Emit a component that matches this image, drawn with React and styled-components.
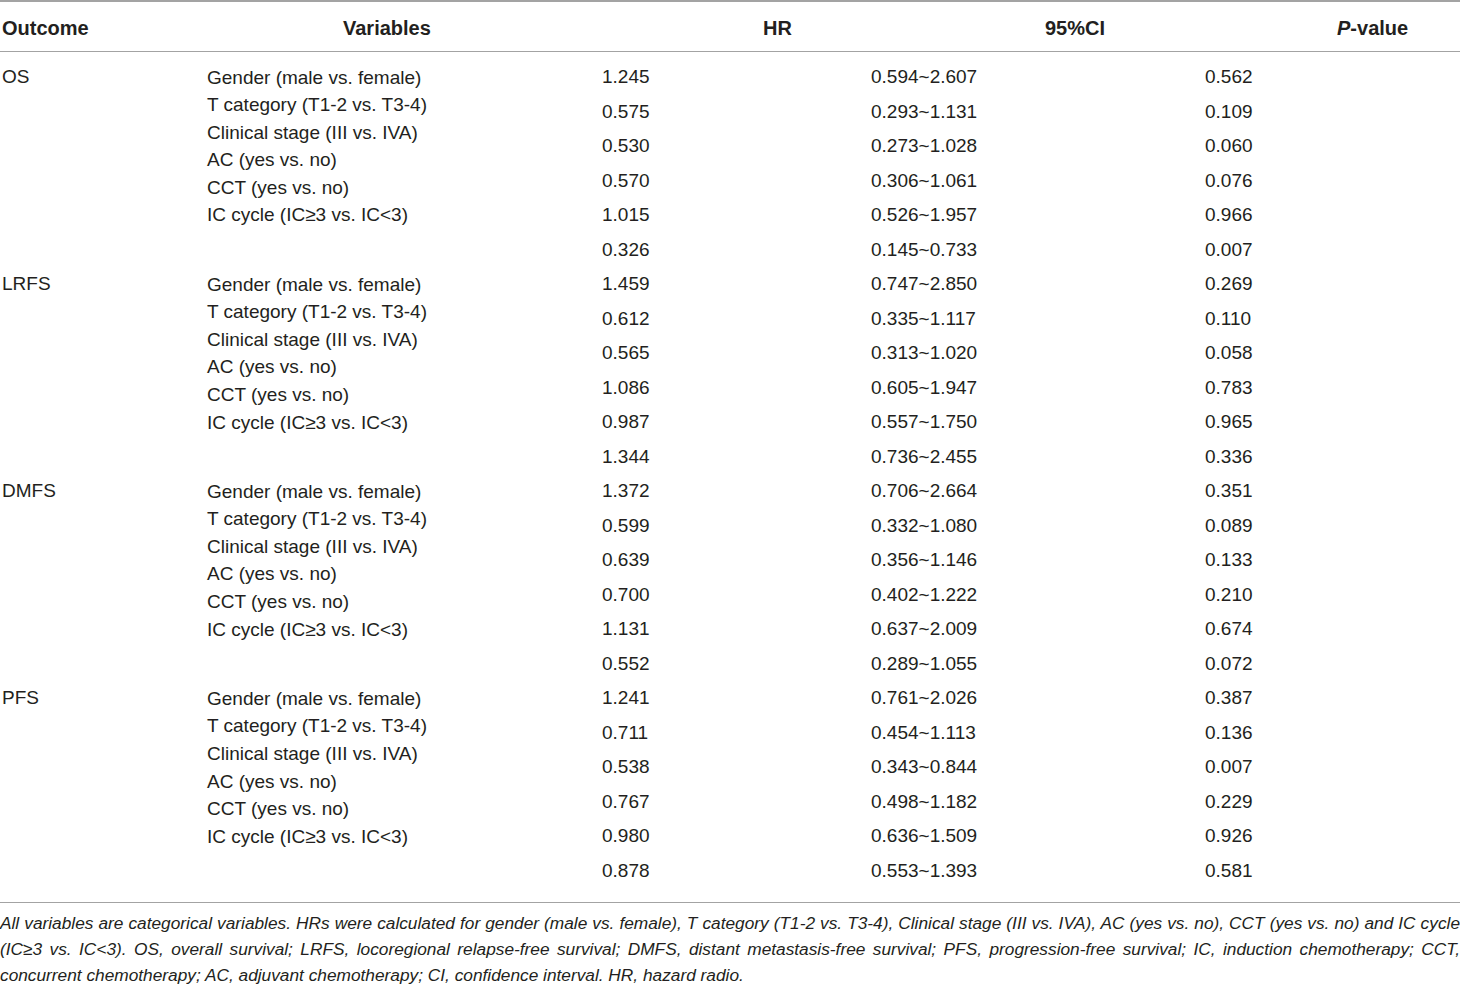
import styled, { createGlobalStyle, css } from 'styled-components';

const GlobalStyle = createGlobalStyle`
  body {
    margin: 0;
    background: #ffffff;
    color: #231f20;
    font-family: 'Liberation Sans', Arial, sans-serif;
  }
`;

const columns = css`
  display: grid;
  grid-template-columns: 207px 395px 269px 334px 1fr;
`;

const TableWrap = styled.div`
  width: 1460px;
  border-top: 2px solid #a3a3a3;
`;

const HeaderRow = styled.div`
  ${columns}
  height: 49px;
  border-bottom: 1.5px solid #a3a3a3;
`;

const HeadCell = styled.div`
  display: flex;
  align-items: center;
  padding: 3px 0 0 ${(p) => p.$pad}px;
  font-size: 20px;
  font-weight: 700;
  white-space: nowrap;
`;

const Body = styled.div`
  padding: 8px 0 14px;
  border-bottom: 1.5px solid #a3a3a3;
`;

const Group = styled.div`
  ${columns}
`;

const Outcome = styled.div`
  padding-left: 2px;
  font-size: 19px;
  line-height: 34.52px;
`;

const List = styled.div`
  display: flex;
  flex-direction: column;
  font-size: 19px;
  line-height: ${(p) => (p.$tight ? '27.6px' : '34.52px')};
  padding-top: ${(p) => (p.$tight ? '3.5px' : '0')};
  white-space: nowrap;
`;

const Note = styled.div`
  padding-top: 7px;
  font-size: 17.3px;
  font-style: italic;
  line-height: 26px;
`;

const NoteLine = styled.div`
  text-align: left;
  text-align-last: ${(p) => (p.$justify ? 'justify' : 'left')};
`;

const variables = [
  'Gender (male vs. female)',
  'T category (T1-2 vs. T3-4)',
  'Clinical stage (III vs. IVA)',
  'AC (yes vs. no)',
  'CCT (yes vs. no)',
  'IC cycle (IC≥3 vs. IC<3)',
];

const groups = [
  {
    outcome: 'OS',
    rows: [
      ['1.245', '0.594~2.607', '0.562'],
      ['0.575', '0.293~1.131', '0.109'],
      ['0.530', '0.273~1.028', '0.060'],
      ['0.570', '0.306~1.061', '0.076'],
      ['1.015', '0.526~1.957', '0.966'],
      ['0.326', '0.145~0.733', '0.007'],
    ],
  },
  {
    outcome: 'LRFS',
    rows: [
      ['1.459', '0.747~2.850', '0.269'],
      ['0.612', '0.335~1.117', '0.110'],
      ['0.565', '0.313~1.020', '0.058'],
      ['1.086', '0.605~1.947', '0.783'],
      ['0.987', '0.557~1.750', '0.965'],
      ['1.344', '0.736~2.455', '0.336'],
    ],
  },
  {
    outcome: 'DMFS',
    rows: [
      ['1.372', '0.706~2.664', '0.351'],
      ['0.599', '0.332~1.080', '0.089'],
      ['0.639', '0.356~1.146', '0.133'],
      ['0.700', '0.402~1.222', '0.210'],
      ['1.131', '0.637~2.009', '0.674'],
      ['0.552', '0.289~1.055', '0.072'],
    ],
  },
  {
    outcome: 'PFS',
    rows: [
      ['1.241', '0.761~2.026', '0.387'],
      ['0.711', '0.454~1.113', '0.136'],
      ['0.538', '0.343~0.844', '0.007'],
      ['0.767', '0.498~1.182', '0.229'],
      ['0.980', '0.636~1.509', '0.926'],
      ['0.878', '0.553~1.393', '0.581'],
    ],
  },
];

const App = () => {
  return (
    <>
      <GlobalStyle />
      <TableWrap>
        <HeaderRow>
          <HeadCell $pad={2}>Outcome</HeadCell>
          <HeadCell $pad={136}>Variables</HeadCell>
          <HeadCell $pad={161}>HR</HeadCell>
          <HeadCell $pad={174}>95%CI</HeadCell>
          <HeadCell $pad={132}>
            <i>P</i>-value
          </HeadCell>
        </HeaderRow>
        <Body>
          {groups.map((group) => (
            <Group key={group.outcome}>
              <Outcome>{group.outcome}</Outcome>
              <List $tight>
                {variables.map((name) => (
                  <span key={name}>{name}</span>
                ))}
              </List>
              {[0, 1, 2].map((col) => (
                <List key={col}>
                  {group.rows.map((row, i) => (
                    <span key={i}>{row[col]}</span>
                  ))}
                </List>
              ))}
            </Group>
          ))}
        </Body>
        <Note>
          <NoteLine $justify>
            All variables are categorical variables. HRs were calculated for gender (male vs. female), T category (T1-2 vs. T3-4), Clinical stage (III vs. IVA), AC (yes vs. no), CCT (yes vs. no) and IC cycle
          </NoteLine>
          <NoteLine $justify>
            (IC≥3 vs. IC&lt;3). OS, overall survival; LRFS, locoregional relapse-free survival; DMFS, distant metastasis-free survival; PFS, progression-free survival; IC, induction chemotherapy; CCT,
          </NoteLine>
          <NoteLine>
            concurrent chemotherapy; AC, adjuvant chemotherapy; CI, confidence interval. HR, hazard radio.
          </NoteLine>
        </Note>
      </TableWrap>
    </>
  );
};

export default App;
